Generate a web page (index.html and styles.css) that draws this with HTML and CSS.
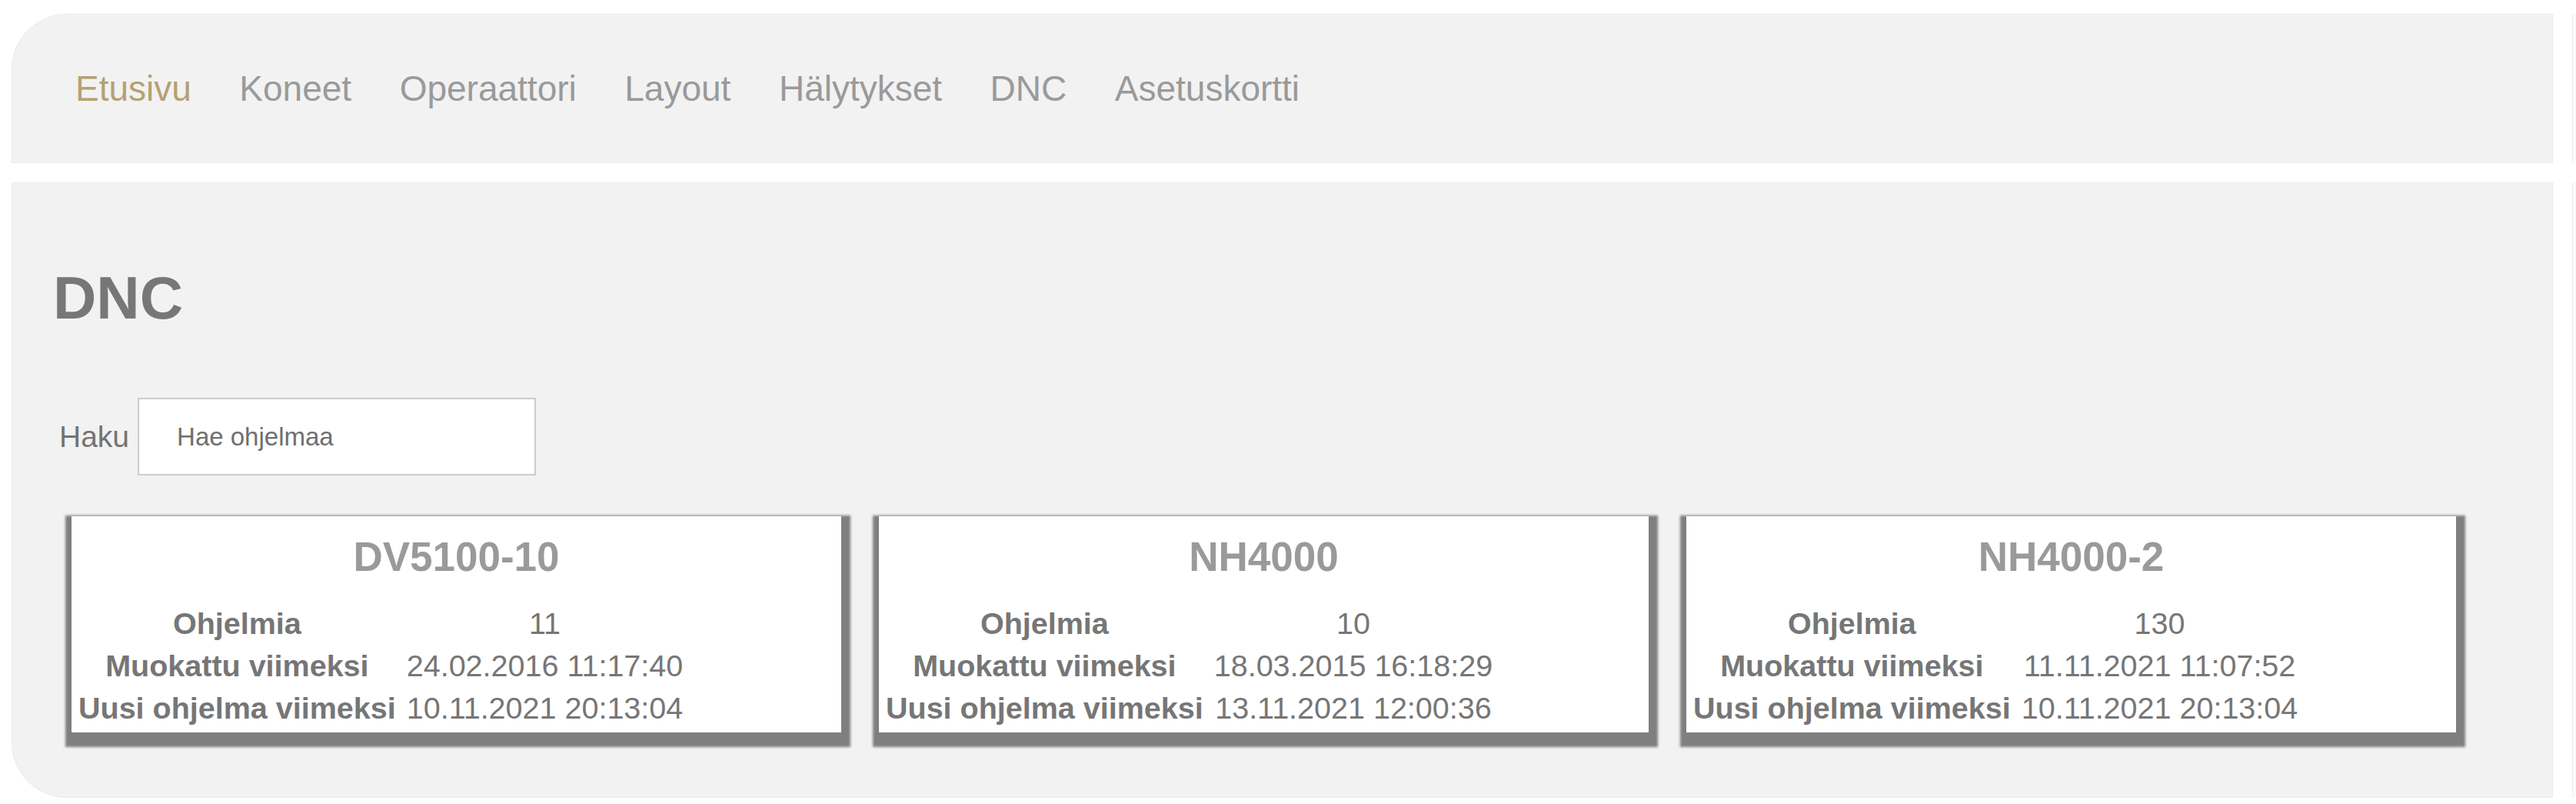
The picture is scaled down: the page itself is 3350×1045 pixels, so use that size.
FILE: index.html
```html
<!DOCTYPE html>
<html lang="fi">
<head>
<meta charset="utf-8">
<title>DNC</title>
<link rel="stylesheet" href="styles.css">
</head>
<body>
<div class="page">
  <div class="row">
    <nav class="nav">
      <a class="nav-link active" href="#">Etusivu</a>
      <a class="nav-link" href="#">Koneet</a>
      <a class="nav-link" href="#">Operaattori</a>
      <a class="nav-link" href="#">Layout</a>
      <a class="nav-link" href="#">Hälytykset</a>
      <a class="nav-link" href="#">DNC</a>
      <a class="nav-link" href="#">Asetuskortti</a>
    </nav>
    <div class="side side-top"></div>
  </div>
  <div class="row">
    <main class="main">
      <h1 class="title">DNC</h1>
      <div class="search">
        <label class="search-label" for="haku">Haku</label>
        <input id="haku" class="search-input" type="text" placeholder="Hae ohjelmaa">
      </div>
      <div class="cards">
        <div class="card">
          <h2 class="card-title">DV5100-10</h2>
          <table class="stats">
            <tr><th>Ohjelmia</th><td>11</td></tr>
            <tr><th>Muokattu viimeksi</th><td>24.02.2016 11:17:40</td></tr>
            <tr><th>Uusi ohjelma viimeksi</th><td>10.11.2021 20:13:04</td></tr>
          </table>
        </div>
        <div class="card">
          <h2 class="card-title">NH4000</h2>
          <table class="stats">
            <tr><th>Ohjelmia</th><td>10</td></tr>
            <tr><th>Muokattu viimeksi</th><td>18.03.2015 16:18:29</td></tr>
            <tr><th>Uusi ohjelma viimeksi</th><td>13.11.2021 12:00:36</td></tr>
          </table>
        </div>
        <div class="card">
          <h2 class="card-title">NH4000-2</h2>
          <table class="stats">
            <tr><th>Ohjelmia</th><td>130</td></tr>
            <tr><th>Muokattu viimeksi</th><td>11.11.2021 11:07:52</td></tr>
            <tr><th>Uusi ohjelma viimeksi</th><td>10.11.2021 20:13:04</td></tr>
          </table>
        </div>
      </div>
    </main>
    <div class="side side-main"></div>
  </div>
</div>
</body>
</html>
```

FILE: styles.css
```css
* { box-sizing: border-box; }

html, body {
  margin: 0;
  padding: 0;
  background: #ffffff;
  overflow: hidden;
}

body {
  font-family: "Liberation Sans", Arial, sans-serif;
  width: 3350px;
  height: 1045px;
}

.page {
  display: flex;
  flex-direction: column;
  gap: 25px;
  padding: 18px 0 0 15px;
}

.row {
  display: flex;
  gap: 25px;
}

.nav {
  flex: none;
  width: 3305px;
  height: 194px;
  background: #f2f2f2;
  border: 1px solid #ebebeb;
  border-top-left-radius: 72px;
  display: flex;
  align-items: center;
  gap: 62.5px;
  padding-left: 82px;
}

.nav-link {
  font-size: 46px;
  color: #9a9a9a;
  text-decoration: none;
  line-height: 1;
}

.nav-link.active {
  color: #b5a172;
}

.side {
  flex: 1;
  min-width: 0;
  background: #fbfbfb;
  border-left: 1px solid #ececec;
}

.side-top { height: 194px; }
.side-main { height: 800px; }

.main {
  flex: none;
  width: 3305px;
  height: 800px;
  background: #f2f2f2;
  border: 1px solid #ebebeb;
  border-bottom-left-radius: 72px;
  padding: 105px 0 0 53px;
}

.title {
  margin: 0;
  font-size: 78px;
  font-weight: bold;
  line-height: 88px;
  color: #777777;
}

.search {
  display: flex;
  align-items: center;
  gap: 11px;
  margin: 86px 0 0 8px;
}

.search-label {
  font-size: 39px;
  color: #737373;
}

.search-input {
  width: 518px;
  height: 101px;
  border: 2px solid #cccccc;
  background: #ffffff;
  padding: 0 0 0 49px;
  font-family: "Liberation Sans", Arial, sans-serif;
  font-size: 33px;
  color: #6f6f6f;
  outline: none;
}

.search-input::placeholder {
  color: #6f6f6f;
  opacity: 1;
}

.cards {
  display: flex;
  gap: 49px;
  margin: 53px 0 0 24px;
}

.card {
  flex: none;
  width: 1001px;
  height: 281px;
  background: #ffffff;
  box-shadow: 2px 9px 3px 10px #7f7f7f;
}

.card-title {
  margin: 22px 0 30px;
  text-align: center;
  font-size: 53px;
  line-height: 61px;
  font-weight: bold;
  color: #9a9a9a;
}

.stats {
  border-collapse: separate;
  border-spacing: 4px 2px;
  margin: -2px 0 0 0;
  font-size: 39.5px;
  color: #767676;
}

.stats th,
.stats td {
  padding: 1px 5px;
  line-height: 51px;
  text-align: center;
  white-space: nowrap;
}

.stats th {
  font-weight: bold;
}

.stats td {
  font-weight: normal;
}
```
